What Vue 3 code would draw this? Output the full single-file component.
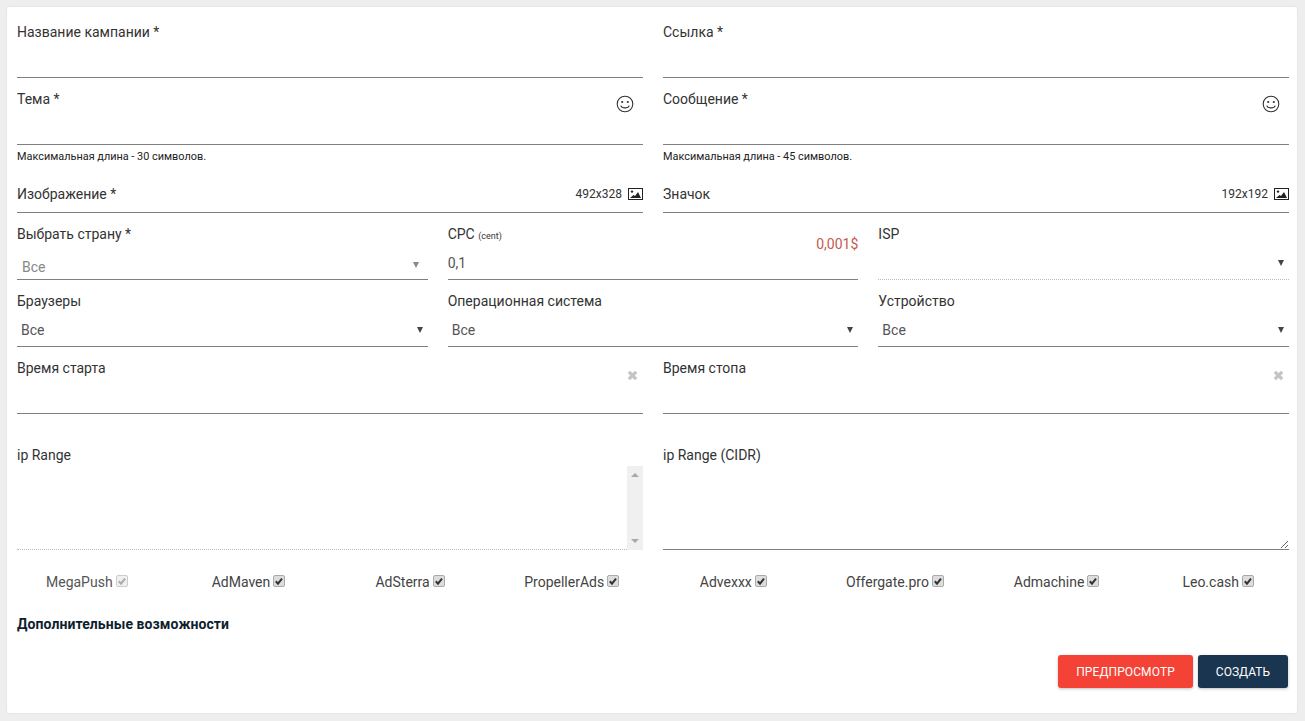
<script setup>
const networks = [
  { name: 'MegaPush', disabled: true },
  { name: 'AdMaven' },
  { name: 'AdSterra' },
  { name: 'PropellerAds' },
  { name: 'Advexxx' },
  { name: 'Offergate.pro' },
  { name: 'Admachine' },
  { name: 'Leo.cash' },
]
</script>

<template>
  <main class="card">
    <div class="row two">
      <div class="field"><label>Название кампании *</label><div class="control"></div></div>
      <div class="field"><label>Ссылка *</label><div class="control"></div></div>
    </div>

    <div class="row two">
      <div class="block">
        <div class="field">
          <label>Тема *</label><div class="control"></div>
          <svg class="smile" viewBox="0 0 18 18"><circle cx="9" cy="9" r="7.8"/><circle class="dot" cx="6.2" cy="7" r="1.1"/><circle class="dot" cx="11.8" cy="7" r="1.1"/><path d="M4.8 10.6c1 3 7.4 3 8.4 0"/></svg>
        </div>
        <p class="help">Максимальная длина - 30 символов.</p>
      </div>
      <div class="block">
        <div class="field">
          <label>Сообщение *</label><div class="control"></div>
          <svg class="smile" viewBox="0 0 18 18"><circle cx="9" cy="9" r="7.8"/><circle class="dot" cx="6.2" cy="7" r="1.1"/><circle class="dot" cx="11.8" cy="7" r="1.1"/><path d="M4.8 10.6c1 3 7.4 3 8.4 0"/></svg>
        </div>
        <p class="help">Максимальная длина - 45 символов.</p>
      </div>
    </div>

    <div class="row two">
      <div class="file">
        <label>Изображение *</label>
        <span class="size">492x328
          <svg class="pic" viewBox="0 0 15 12"><rect x=".5" y=".5" width="14" height="11" fill="#fff" stroke="#222"/><path d="M2 10l3.5-3 1.5 1 3-4 3 6z" fill="#222"/><circle cx="4" cy="3.6" r="1.2" fill="#222"/></svg>
        </span>
      </div>
      <div class="file">
        <label>Значок</label>
        <span class="size">192x192
          <svg class="pic" viewBox="0 0 15 12"><rect x=".5" y=".5" width="14" height="11" fill="#fff" stroke="#222"/><path d="M2 10l3.5-3 1.5 1 3-4 3 6z" fill="#222"/><circle cx="4" cy="3.6" r="1.2" fill="#222"/></svg>
        </span>
      </div>
    </div>

    <div class="row three">
      <div class="field">
        <label>Выбрать страну *</label>
        <div class="control select muted"><span>Все</span><i class="arrow"></i></div>
      </div>
      <div class="field">
        <label>CPC <small>(cent)</small></label>
        <div class="control value"><span>0,1</span></div>
        <span class="price">0,001$</span>
      </div>
      <div class="field">
        <label>ISP</label>
        <div class="control select dotted"><span></span><i class="arrow"></i></div>
      </div>
    </div>

    <div class="row three">
      <div class="field"><label>Браузеры</label><div class="control select"><span>Все</span><i class="arrow"></i></div></div>
      <div class="field"><label>Операционная система</label><div class="control select"><span>Все</span><i class="arrow"></i></div></div>
      <div class="field"><label>Устройство</label><div class="control select"><span>Все</span><i class="arrow"></i></div></div>
    </div>

    <div class="row two">
      <div class="field">
        <label>Время старта</label><div class="control"></div>
        <svg class="clear" viewBox="0 0 10 10"><path d="M1.7 1.7l6.6 6.6M8.3 1.7l-6.6 6.6"/></svg>
      </div>
      <div class="field">
        <label>Время стопа</label><div class="control"></div>
        <svg class="clear" viewBox="0 0 10 10"><path d="M1.7 1.7l6.6 6.6M8.3 1.7l-6.6 6.6"/></svg>
      </div>
    </div>

    <div class="row two areas">
      <div class="area">
        <label>ip Range</label>
        <div class="box dotted">
          <div class="scroll"><i class="up"></i><i class="down"></i></div>
        </div>
      </div>
      <div class="area">
        <label>ip Range (CIDR)</label>
        <textarea class="text"></textarea>
      </div>
    </div>

    <div class="networks">
      <div v-for="n in networks" :key="n.name" class="net" :class="{ off: n.disabled }">
        <span>{{ n.name }}</span>
        <span class="check"><svg viewBox="0 0 10 10"><path d="M1.8 5.2l2.2 2.4 4-5"/></svg></span>
      </div>
    </div>

    <h3 class="title">Дополнительные возможности</h3>

    <div class="actions">
      <button class="btn red">Предпросмотр</button>
      <button class="btn navy">Создать</button>
    </div>
  </main>
</template>

<style scoped>
.card {
  margin: 7px 8px 8px 7px;
  padding: 15px 8px 25px 10px;
  background: #fff;
  border-radius: 3px;
  box-shadow: 0 0 2px rgba(0, 0, 0, .12);
  font-family: Roboto, "Noto Sans", sans-serif;
  font-size: 14px;
  color: #333;
}
.row { display: grid; gap: 20px; margin-bottom: 11px; }
.two { grid-template-columns: 1fr 1fr; }
.three { grid-template-columns: 1fr 1fr 1fr; }
.field { position: relative; height: 56px; display: flex; flex-direction: column; }
label { display: block; height: 20px; line-height: 20px; }
small { font-size: 9px; }
.control { flex: 1; border-bottom: 1px solid #808080; }
.dotted { border-bottom: 1px dotted #bbb; }
.select { display: flex; align-items: center; justify-content: space-between; padding: 2px 5px 0 4px; color: #555; }
.muted { color: #888; padding: 10px 5px 0 5px; }
.value { padding-top: 9px; line-height: 20px; color: #555; }
.arrow { width: 0; height: 0; border: 3.5px solid transparent; border-top: 6px solid #444; border-bottom: 0; }
.muted .arrow { border-top-color: #888; margin-top: -4px; margin-right: 4px; }
.smile { position: absolute; right: 9px; top: 6px; width: 18px; height: 18px; fill: none; stroke: #333; stroke-width: 1.1; }
.smile .dot { fill: #333; stroke: none; }
.block { margin-bottom: 4px; }
.help { margin: 0; height: 24px; line-height: 24px; font-size: 10.9px; color: #222; }
.file { height: 28px; display: flex; align-items: flex-start; justify-content: space-between; border-bottom: 1px solid #808080; }
.size { display: flex; align-items: center; gap: 6px; height: 20px; font-size: 12px; color: #333; }
.pic { width: 15px; height: 12px; }
.price { position: absolute; right: 0; top: 10px; line-height: 20px; color: #c45a50; }
.clear { position: absolute; right: 5px; top: 12px; width: 11px; height: 11px; fill: none; stroke: #c4c4c4; stroke-width: 3; }
.areas { margin-top: 31px; margin-bottom: 0; }
.area { height: 105px; display: flex; flex-direction: column; }
.box { flex: 1; display: flex; justify-content: flex-end; }
.scroll { width: 16px; margin: 1px 0 -1px; background: #f0f0f0; display: flex; flex-direction: column; justify-content: space-between; align-items: center; padding: 7px 0; }
.up, .down { width: 0; height: 0; border: 4px solid transparent; }
.up { border-bottom: 4px solid #a8a8a8; border-top: 0; }
.down { border-top: 4px solid #a8a8a8; border-bottom: 0; }
.text { flex: 1; display: block; width: 100%; box-sizing: border-box; padding: 0; margin: 0; border: 0; border-bottom: 1px solid #808080; outline: 0; resize: vertical; background: #fff; }
.networks { display: grid; grid-template-columns: repeat(8, 1fr); margin: 22px 0 0 -11px; width: 1293px; }
.net { display: flex; justify-content: center; align-items: center; gap: 3px; height: 20px; color: #444; }
.check { width: 12px; height: 12px; margin-top: -3px; box-sizing: border-box; border: 1px solid #aaa; border-radius: 2px; background: #ddd; display: flex; }
.check svg { width: 10px; height: 10px; fill: none; stroke: #333; stroke-width: 2; }
.off .check { border-color: #ccc; background: #f0f0f0; }
.off .check svg { stroke: #aaa; }
.off { color: #555; }
.title { margin: 22px 0 0; height: 20px; line-height: 20px; font-size: 14px; font-weight: 700; letter-spacing: .08px; color: #0f1e2d; }
.actions { display: flex; justify-content: flex-end; gap: 5px; margin: 21px 1px 0 0; }
.btn { height: 33px; border: 0; border-radius: 3px; padding: 0 18px; font: 12px Roboto, sans-serif; text-transform: uppercase; color: #fff; box-shadow: 0 1px 3px rgba(0, 0, 0, .25); }
.red { background: #f44336; letter-spacing: .1px; }
.navy { background: #1a3550; }
</style>

<style>
html, body { background: #eee; }
</style>
